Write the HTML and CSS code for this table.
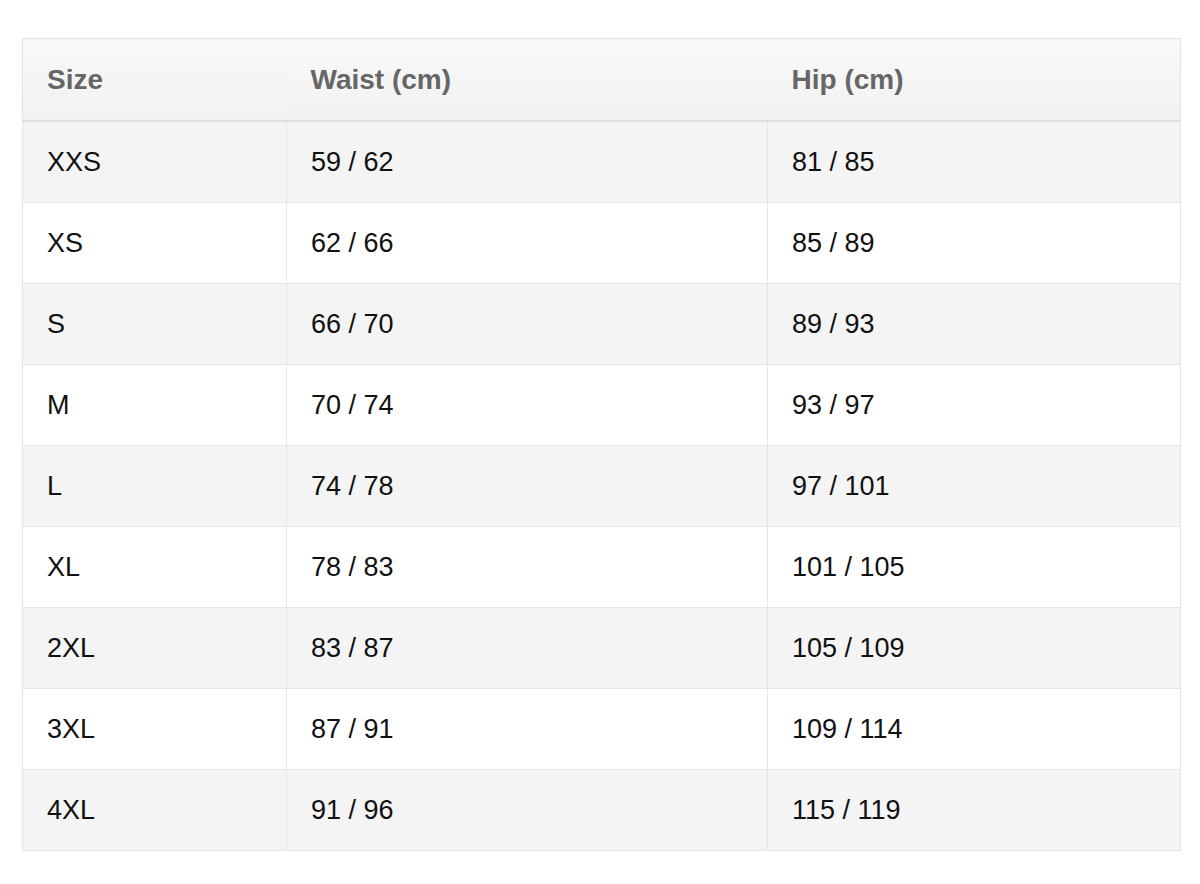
FILE: index.html
```html
<!DOCTYPE html>
<html>
<head>
<meta charset="utf-8">
<link rel="stylesheet" href="styles.css">
</head>
<body>
<div class="page">
  <table class="size-table">
    <colgroup>
      <col class="c1"><col class="c2"><col class="c3">
    </colgroup>
    <thead>
      <tr><th>Size</th><th>Waist (cm)</th><th>Hip (cm)</th></tr>
    </thead>
    <tbody>
      <tr><td>XXS</td><td>59 / 62</td><td>81 / 85</td></tr>
      <tr><td>XS</td><td>62 / 66</td><td>85 / 89</td></tr>
      <tr><td>S</td><td>66 / 70</td><td>89 / 93</td></tr>
      <tr><td>M</td><td>70 / 74</td><td>93 / 97</td></tr>
      <tr><td>L</td><td>74 / 78</td><td>97 / 101</td></tr>
      <tr><td>XL</td><td>78 / 83</td><td>101 / 105</td></tr>
      <tr><td>2XL</td><td>83 / 87</td><td>105 / 109</td></tr>
      <tr><td>3XL</td><td>87 / 91</td><td>109 / 114</td></tr>
      <tr><td>4XL</td><td>91 / 96</td><td>115 / 119</td></tr>
    </tbody>
  </table>
</div>
</body>
</html>
```

FILE: styles.css
```css
html, body {
  margin: 0;
  padding: 0;
  background: #ffffff;
}
.page {
  padding: 38px 20px 0 22px;
}
.size-table {
  width: 1158px;
  border-collapse: collapse;
  table-layout: fixed;
  border: 1px solid #e4e4e4;
  font-family: "Liberation Sans", Arial, Helvetica, sans-serif;
}
.c1 { width: 264px; }
.c2 { width: 481px; }
.c3 { width: 413px; }
.size-table th {
  height: 81px;
  padding: 0 0 0 24px;
  text-align: left;
  font-size: 28px;
  font-weight: bold;
  color: #666666;
  background: linear-gradient(#f9f9f9, #f1f1f1);
  border-bottom: 2px solid #dedede;
}
.size-table td {
  height: 80px;
  padding: 0 0 0 24px;
  font-size: 27px;
  color: #111111;
  border-top: 1px solid #e6e6e6;
  border-left: 1px solid #e6e6e6;
}
.size-table tbody tr:nth-child(odd) td {
  background: #f4f4f4;
}
.size-table tbody tr:nth-child(even) td {
  background: #ffffff;
}
```
